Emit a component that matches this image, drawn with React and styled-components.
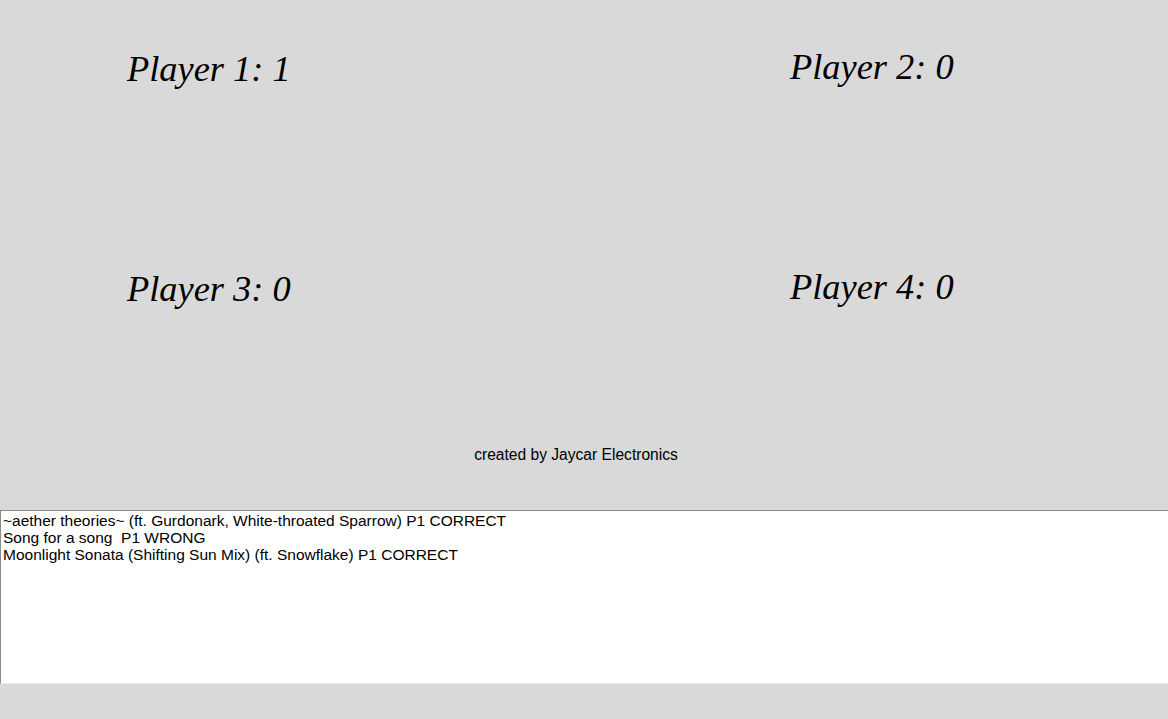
import React from "react";
import styled, { createGlobalStyle } from "styled-components";

const players = [
  { name: "Player 1", score: 1 },
  { name: "Player 2", score: 0, raised: true },
  { name: "Player 3", score: 0 },
  { name: "Player 4", score: 0, raised: true },
];

const history = [
  "~aether theories~ (ft. Gurdonark, White-throated Sparrow) P1 CORRECT",
  "Song for a song  P1 WRONG",
  "Moonlight Sonata (Shifting Sun Mix) (ft. Snowflake) P1 CORRECT",
].join("\n");

const App = () => {
  return (
    <>
      <GlobalStyle />
      <Page>
        <Scoreboard>
          {players.map((p) => (
            <Score key={p.name} $raised={p.raised}>
              {p.name}: {p.score}
            </Score>
          ))}
        </Scoreboard>
        <Credit>created by Jaycar Electronics</Credit>
        <Log readOnly value={history} />
      </Page>
    </>
  );
};

const GlobalStyle = createGlobalStyle`
  html, body {
    margin: 0;
    padding: 0;
    background: #d9d9d9;
    overflow-x: hidden;
  }
  body {
    font-family: "Liberation Sans", Arial, sans-serif;
    color: #000;
  }
`;

const Page = styled.main`
  display: flex;
  flex-direction: column;
  min-height: 100vh;
`;

const Scoreboard = styled.section`
  display: grid;
  grid-template-columns: 663px 1fr;
  row-gap: 179px;
  padding: 49px 0 0 127px;
`;

const Score = styled.div`
  font-family: "Liberation Serif", "Times New Roman", serif;
  font-style: italic;
  font-size: 36.4px;
  line-height: 41px;
  margin-top: ${(p) => (p.$raised ? "-2px" : "0")};
`;

const Credit = styled.p`
  margin: 136px 0 0;
  padding-right: 16px;
  text-align: center;
  font-size: 15.6px;
  line-height: 17px;
`;

const Log = styled.textarea`
  display: block;
  box-sizing: border-box;
  margin-top: 47px;
  width: calc(100% + 4px);
  height: 174px;
  padding: 1px 2px 0;
  border-style: solid;
  border-width: 1px;
  border-color: #8a8a8a #ececec #ececec #8a8a8a;
  background: #fff;
  font-family: "Liberation Sans", Arial, sans-serif;
  font-size: 15.5px;
  line-height: 17px;
  color: #000;
  resize: none;
  outline: none;
  overflow: hidden;
`;

export default App;
